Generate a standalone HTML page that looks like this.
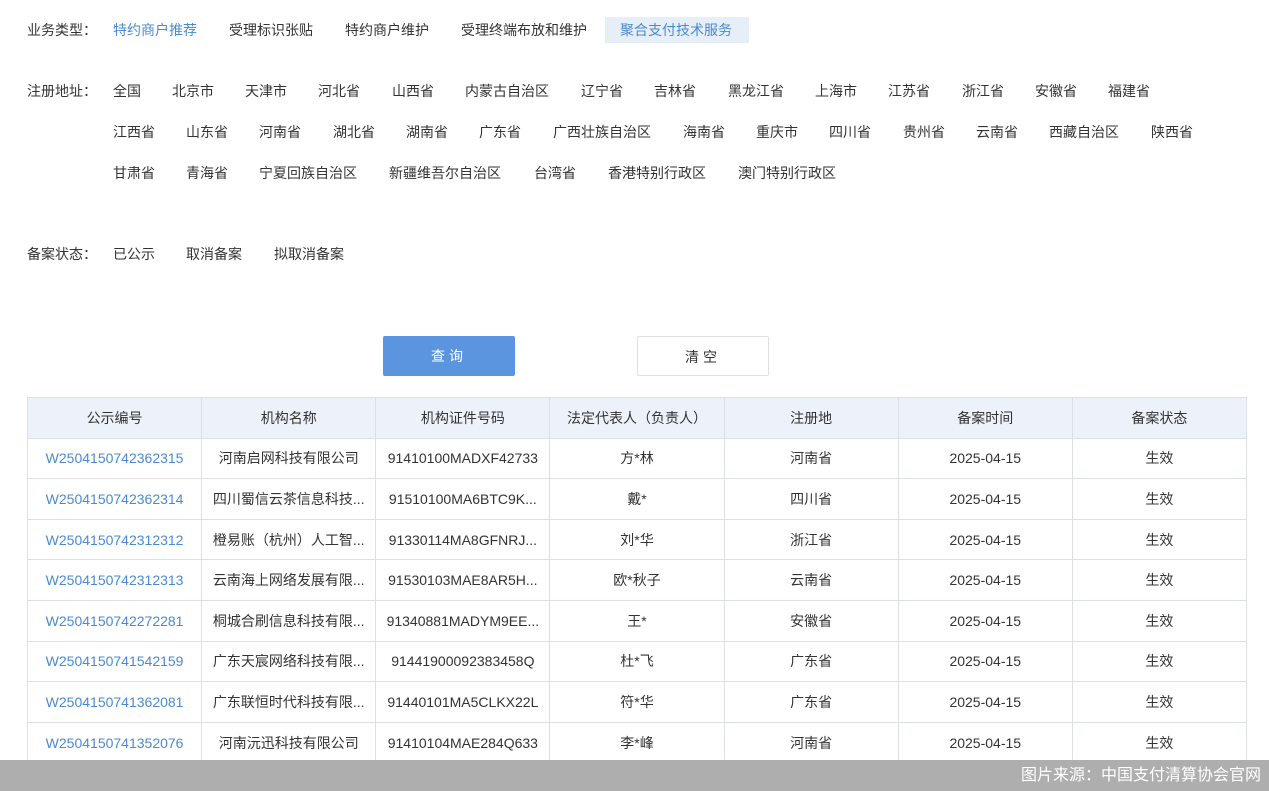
<!DOCTYPE html>
<html><head><meta charset="utf-8"><style>
*{margin:0;padding:0;box-sizing:border-box}
body{width:1269px;height:791px;background:#fff;position:relative;overflow:hidden;font-family:"Liberation Sans","Noto Sans CJK SC",sans-serif;font-size:14px;color:#333}
.t{position:absolute;white-space:nowrap;line-height:20px}
.b{color:#4a8ad0}
.sel{position:absolute;left:605px;top:17px;width:144px;height:26px;background:#e6eef8}
.btn{position:absolute;top:336px;width:132px;height:40px;text-align:center;line-height:40px;letter-spacing:4px}
table{position:absolute;left:27px;top:397px;width:1220px;border-collapse:collapse;table-layout:fixed}
td,th{border:1px solid #dcdfe6;height:40.6px;text-align:center;font-weight:normal;white-space:nowrap;overflow:hidden;font-size:14px}
th{background:#edf2fa;color:#333}
td:first-child{color:#4a8ad0}
.bar{position:absolute;left:0;top:760px;width:1269px;height:31px;background:#aeaeae;color:#fff;font-size:16px;text-align:right;padding-right:8px;line-height:31px}
</style></head><body>
<div class="sel"></div>
<span class="t" style="left:27px;top:20px">业务类型：</span>
<span class="t b" style="left:113px;top:20px">特约商户推荐</span>
<span class="t" style="left:229px;top:20px">受理标识张贴</span>
<span class="t" style="left:345px;top:20px">特约商户维护</span>
<span class="t" style="left:461px;top:20px">受理终端布放和维护</span>
<span class="t b" style="left:620px;top:20px">聚合支付技术服务</span>

<span class="t" style="left:27px;top:81px">注册地址：</span>
<span class="t" style="left:113px;top:81px">全国</span>
<span class="t" style="left:172px;top:81px">北京市</span>
<span class="t" style="left:245px;top:81px">天津市</span>
<span class="t" style="left:318px;top:81px">河北省</span>
<span class="t" style="left:392px;top:81px">山西省</span>
<span class="t" style="left:465px;top:81px">内蒙古自治区</span>
<span class="t" style="left:581px;top:81px">辽宁省</span>
<span class="t" style="left:654px;top:81px">吉林省</span>
<span class="t" style="left:728px;top:81px">黑龙江省</span>
<span class="t" style="left:815px;top:81px">上海市</span>
<span class="t" style="left:888px;top:81px">江苏省</span>
<span class="t" style="left:962px;top:81px">浙江省</span>
<span class="t" style="left:1035px;top:81px">安徽省</span>
<span class="t" style="left:1108px;top:81px">福建省</span>

<span class="t" style="left:113px;top:122px">江西省</span>
<span class="t" style="left:186px;top:122px">山东省</span>
<span class="t" style="left:259px;top:122px">河南省</span>
<span class="t" style="left:333px;top:122px">湖北省</span>
<span class="t" style="left:406px;top:122px">湖南省</span>
<span class="t" style="left:479px;top:122px">广东省</span>
<span class="t" style="left:553px;top:122px">广西壮族自治区</span>
<span class="t" style="left:683px;top:122px">海南省</span>
<span class="t" style="left:756px;top:122px">重庆市</span>
<span class="t" style="left:829px;top:122px">四川省</span>
<span class="t" style="left:903px;top:122px">贵州省</span>
<span class="t" style="left:976px;top:122px">云南省</span>
<span class="t" style="left:1049px;top:122px">西藏自治区</span>
<span class="t" style="left:1151px;top:122px">陕西省</span>

<span class="t" style="left:113px;top:163px">甘肃省</span>
<span class="t" style="left:186px;top:163px">青海省</span>
<span class="t" style="left:259px;top:163px">宁夏回族自治区</span>
<span class="t" style="left:389px;top:163px">新疆维吾尔自治区</span>
<span class="t" style="left:534px;top:163px">台湾省</span>
<span class="t" style="left:608px;top:163px">香港特别行政区</span>
<span class="t" style="left:738px;top:163px">澳门特别行政区</span>

<span class="t" style="left:27px;top:244px">备案状态：</span>
<span class="t" style="left:113px;top:244px">已公示</span>
<span class="t" style="left:186px;top:244px">取消备案</span>
<span class="t" style="left:274px;top:244px">拟取消备案</span>

<div class="btn" style="left:383px;background:#5b95e0;color:#fff;border-radius:2px">查询</div>
<div class="btn" style="left:637px;border:1px solid #dcdfe6;border-radius:2px">清空</div>

<table>
<tr><th>公示编号</th><th>机构名称</th><th>机构证件号码</th><th>法定代表人（负责人）</th><th>注册地</th><th>备案时间</th><th>备案状态</th></tr>
<tr><td>W2504150742362315</td><td>河南启网科技有限公司</td><td>91410100MADXF42733</td><td>方*林</td><td>河南省</td><td>2025-04-15</td><td>生效</td></tr>
<tr><td>W2504150742362314</td><td>四川蜀信云茶信息科技...</td><td>91510100MA6BTC9K...</td><td>戴*</td><td>四川省</td><td>2025-04-15</td><td>生效</td></tr>
<tr><td>W2504150742312312</td><td>橙易账（杭州）人工智...</td><td>91330114MA8GFNRJ...</td><td>刘*华</td><td>浙江省</td><td>2025-04-15</td><td>生效</td></tr>
<tr><td>W2504150742312313</td><td>云南海上网络发展有限...</td><td>91530103MAE8AR5H...</td><td>欧*秋子</td><td>云南省</td><td>2025-04-15</td><td>生效</td></tr>
<tr><td>W2504150742272281</td><td>桐城合刷信息科技有限...</td><td>91340881MADYM9EE...</td><td>王*</td><td>安徽省</td><td>2025-04-15</td><td>生效</td></tr>
<tr><td>W2504150741542159</td><td>广东天宸网络科技有限...</td><td>91441900092383458Q</td><td>杜*飞</td><td>广东省</td><td>2025-04-15</td><td>生效</td></tr>
<tr><td>W2504150741362081</td><td>广东联恒时代科技有限...</td><td>91440101MA5CLKX22L</td><td>符*华</td><td>广东省</td><td>2025-04-15</td><td>生效</td></tr>
<tr><td>W2504150741352076</td><td>河南沅迅科技有限公司</td><td>91410104MAE284Q633</td><td>李*峰</td><td>河南省</td><td>2025-04-15</td><td>生效</td></tr>
</table>
<div class="bar">图片来源：中国支付清算协会官网</div>
</body></html>
